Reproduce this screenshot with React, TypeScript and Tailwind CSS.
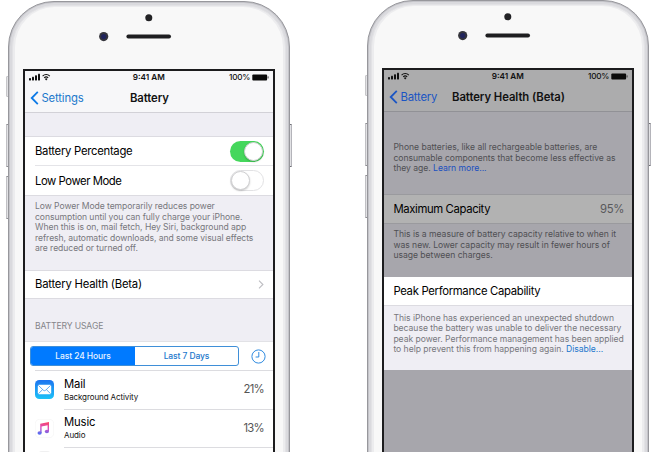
import type { ReactNode } from "react";

const label = "block whitespace-nowrap text-[11.3px] leading-[14px] text-black";
const foot = "block whitespace-nowrap text-[8.6px] leading-[10.6px]";

function Signal() {
  return (
    <svg width="22" height="8" viewBox="0 0 22 8" className="block text-[#111]">
      <rect x="0" y="5" width="2" height="2.5" rx="0.4" fill="currentColor" />
      <rect x="3" y="3.8" width="2" height="3.7" rx="0.4" fill="currentColor" />
      <rect x="6" y="2.3" width="2" height="5.2" rx="0.4" fill="currentColor" />
      <rect x="9" y="0.8" width="2" height="6.7" rx="0.4" fill="currentColor" />
      <g fill="none" stroke="currentColor" strokeWidth="1.1">
        <path d="M13.6 3.1a5 5 0 0 1 7.2 0" />
        <path d="M15.2 4.8a2.9 2.9 0 0 1 4 0" />
      </g>
      <path d="M17.2 7.5l-1.3-1.6a1.9 1.9 0 0 1 2.6 0z" fill="currentColor" />
    </svg>
  );
}

function BatteryIcon() {
  return (
    <svg width="17" height="7" viewBox="0 0 17 7" className="block">
      <rect x="0.3" y="0.4" width="14.8" height="6" rx="1" fill="#0a0a0a" />
      <rect x="15.6" y="2.2" width="0.9" height="2.4" rx="0.4" fill="#333" />
    </svg>
  );
}

function Header({ back, title, dim }: { back: string; title: ReactNode; dim?: boolean }) {
  return (
    <div
      className={
        dim
          ? "h-[42px] border-b border-[#919196] bg-[#acacad]"
          : "h-[42px] border-b border-[#d2d1d7] bg-[#f7f7f9]"
      }
    >
      <div className="grid h-[12px] grid-cols-3 items-center pr-[4px] pl-[3.5px] text-[8.2px] leading-[10px] font-semibold text-[#111]">
        <Signal />
        <span className="text-center whitespace-nowrap">9:41 AM</span>
        <span className="flex items-center justify-end gap-[2px] font-medium">
          <span className="tracking-[-0.3px]">100%</span>
          <BatteryIcon />
        </span>
      </div>
      <div className="flex h-[28px] items-center pt-[2px] pl-[5px]">
        <svg width="9" height="14" viewBox="0 0 9 14" className="block">
          <path d="M7.8 0.9L1.7 7l6.1 6.1" fill="none" stroke={dim ? "#1a55c4" : "#0b79e6"} strokeWidth="1.8" />
        </svg>
        <span
          className={
            dim
              ? "ml-[2.5px] w-[51.5px] text-[11.3px] leading-[14px] tracking-[-0.2px] text-[#1a55c4]"
              : "ml-[2.5px] w-[88.5px] text-[11.3px] leading-[14px] tracking-[-0.15px] text-[#1b77cc]"
          }
        >
          {back}
        </span>
        {title}
      </div>
    </div>
  );
}

function Phone({ children }: { children: ReactNode }) {
  return (
    <div className="relative w-[284px] shrink-0 px-[1px]">
      <div className="absolute top-[75px] left-[-1px] h-[21px] w-[3px] rounded-[1px] border border-[#c6c6c9] bg-[#e2e2e5]" />
      <div className="absolute top-[123px] left-[-1px] h-[43px] w-[3px] rounded-[1px] border border-y-[#8f8f94] border-l-[#c0c0c4] bg-[#e2e2e5]" />
      <div className="absolute top-[175px] left-[-1px] h-[43px] w-[3px] rounded-[1px] border border-y-[#8f8f94] border-l-[#c0c0c4] bg-[#e2e2e5]" />
      <div className="absolute top-[123px] right-[-1px] h-[43px] w-[3px] rounded-[1px] border border-y-[#6f6f76] border-r-[#b4b4ba] bg-[#e2e2e5]" />
      <div className="relative h-[520px] rounded-t-[46px] border border-[#97979c] bg-[#c4c4c9] p-[1px]">
        <div className="h-full rounded-t-[44px] bg-[#dadade] px-[2px] pt-[2px]">
          <div className="h-full rounded-t-[42px] border border-[#e2e2e5] bg-[#ececee] px-[2px] pt-[1px]">
            <div className="h-full rounded-t-[40px] bg-[#f8f8f8] pr-[6px] pl-[8px]">
              <svg width="252" height="62" viewBox="0 0 252 62" className="block">
                <circle cx="125.8" cy="10.8" r="3.5" fill="#222225" />
                <circle cx="80.7" cy="29.6" r="4.6" fill="#35353c" />
                <circle cx="80.7" cy="29.6" r="2.6" fill="#20245c" />
                <rect x="103.4" y="27.6" width="44.6" height="4" rx="2" fill="#1e1e20" />
              </svg>
              <div className="h-[440px] w-[252px] border-2 border-[#1c1c1e]">{children}</div>
            </div>
          </div>
        </div>
      </div>
    </div>
  );
}

function Toggle({ on }: { on?: boolean }) {
  return (
    <div
      className={
        on
          ? "flex h-[21px] w-[34px] items-center justify-end rounded-full bg-[#45d75c] p-[1px]"
          : "flex h-[21px] w-[34px] items-center rounded-full border border-[#e2e2e4] bg-white"
      }
    >
      <div className="size-[19px] rounded-full border-[0.5px] border-[#d0d0d2] bg-white shadow-[0_1px_2px_rgba(0,0,0,0.2)]" />
    </div>
  );
}

function Usage({ icon, name, detail, value }: { icon: ReactNode; name: string; detail: string; value: string }) {
  return (
    <div className="flex h-[38.5px] pl-[10px]">
      <div className="w-[29px] pt-[9px]">{icon}</div>
      <div className="flex flex-1 items-center justify-between border-b border-[#dcdce0] pr-[9px]">
        <div>
          <div className="text-[11.3px] leading-[14px] tracking-[-0.15px] text-black">{name}</div>
          <div className="text-[8px] leading-[12px] tracking-[-0.1px] text-[#111]">{detail}</div>
        </div>
        <div className="text-[11.3px] tracking-[-0.7px] text-[#555]">{value}</div>
      </div>
    </div>
  );
}

function MailIcon() {
  return (
    <svg width="19" height="19" viewBox="0 0 19 19" className="block">
      <defs>
        <linearGradient id="mail" x1="0" y1="0" x2="0" y2="1">
          <stop offset="0" stopColor="#1d74f0" />
          <stop offset="1" stopColor="#1cc3f8" />
        </linearGradient>
      </defs>
      <rect width="19" height="19" rx="4.3" fill="url(#mail)" />
      <rect x="2.8" y="4.8" width="13.4" height="9.4" rx="1.2" fill="#fff" />
      <path d="M3.3 5.3l5 4.9q1.2 1 2.4 0l5-4.9M3.3 13.8l4.3-4.2M15.7 13.8l-4.3-4.2" fill="none" stroke="#3a97ee" strokeWidth="0.8" />
    </svg>
  );
}

function MusicIcon() {
  return (
    <svg width="19" height="19" viewBox="0 0 19 19" className="block">
      <defs>
        <linearGradient id="note" gradientUnits="userSpaceOnUse" x1="10" y1="3" x2="8" y2="15">
          <stop offset="0" stopColor="#fb4468" />
          <stop offset="0.5" stopColor="#d84fc0" />
          <stop offset="1" stopColor="#5a6cf0" />
        </linearGradient>
      </defs>
      <rect x="0.3" y="0.3" width="18.4" height="18.4" rx="4.3" fill="#fff" stroke="#f3f3f4" strokeWidth="0.6" />
      <g fill="url(#note)">
        <path d="M5.2 4.8l8.8-1.7v9.2h-1.4V6.3L6.6 7.5V14H5.2z" />
        <ellipse cx="4.6" cy="14" rx="2.1" ry="1.7" />
        <ellipse cx="11.9" cy="12.5" rx="2.1" ry="1.7" />
      </g>
    </svg>
  );
}

export default function App() {
  return (
    <div className="h-[452px] w-[660px] overflow-hidden bg-white font-['Inter','Liberation_Sans',sans-serif]">
      <div className="flex gap-[75px] pl-[7px]">
        <div className="pt-[1px]">
          <Phone>
            <div className="h-full bg-[#efeef4]">
              <Header
                back="Settings"
                title={<span className="text-[11.3px] leading-[14px] font-semibold tracking-[-0.1px] text-[#111]">Battery</span>}
              />
              <div className="mt-[23px] border-y border-[#dcdbe1] bg-white pl-[10px]">
                <div className="flex h-[29px] items-center justify-between border-b border-[#e4e4e8] pr-[9.5px]">
                  <span className={`${label} tracking-[-0.28px]`}>Battery Percentage</span>
                  <Toggle on />
                </div>
                <div className="flex h-[29px] items-center justify-between pr-[9.5px]">
                  <span className={`${label} tracking-[-0.45px]`}>Low Power Mode</span>
                  <Toggle />
                </div>
              </div>
              <div className="h-[73.5px] pt-[5px] pl-[10px] tracking-[-0.06px] text-[#77777c]">
                <span className={foot}>Low Power Mode temporarily reduces power</span>
                <span className={foot}>consumption until you can fully charge your iPhone.</span>
                <span className={foot}>When this is on, mail fetch, Hey Siri, background app</span>
                <span className={foot}>refresh, automatic downloads, and some visual effects</span>
                <span className={foot}>are reduced or turned off.</span>
              </div>
              <div className="flex h-[29px] items-center justify-between border-y border-[#dcdbe1] bg-white pr-[9px] pl-[10px]">
                <span className={`${label} tracking-[-0.22px]`}>Battery Health (Beta)</span>
                <svg width="6" height="9" viewBox="0 0 6 9" className="block">
                  <path d="M1 0.7l3.9 3.8L1 8.3" fill="none" stroke="#bdbdc2" strokeWidth="1.1" />
                </svg>
              </div>
              <div className="h-[42.5px] pt-[22.5px] pl-[10px] text-[8.6px] leading-[11px] tracking-[-0.12px] text-[#85858a]">BATTERY USAGE</div>
              <div className="h-[140px] border-t border-[#e2e2e6] bg-white">
                <div className="flex h-[28px] items-center pl-[5px]">
                  <div className="flex h-[20px] w-[209px] overflow-hidden rounded-[3px] border border-[#3f8fd8] text-[8.5px] leading-[18px] font-medium tracking-[-0.1px]">
                    <div className="w-[104px] bg-[#007aff] text-center text-[#e8f3ff]">Last 24 Hours</div>
                    <div className="flex-1 text-center text-[#1b77cc]">Last 7 Days</div>
                  </div>
                  <svg width="15" height="15" viewBox="0 0 15 15" className="ml-[12px] block">
                    <circle cx="7.5" cy="7.5" r="6.6" fill="none" stroke="#2f8be0" strokeWidth="1" />
                    <path d="M7.8 3v5H4.6" fill="none" stroke="#2f8be0" strokeWidth="1" />
                  </svg>
                </div>
                <div className="ml-[10px] h-px bg-[#dcdce0]" />
                <Usage icon={<MailIcon />} name="Mail" detail="Background Activity" value="21%" />
                <Usage icon={<MusicIcon />} name="Music" detail="Audio" value="13%" />
                <div className="mt-[3px] ml-[13px] h-[16px] w-[13px] rounded-[4px] bg-[#f0f0f1]" />
              </div>
            </div>
          </Phone>
        </div>
        <div>
          <Phone>
            <div className="h-full bg-[#a7a6ac]">
              <Header
                dim
                back="Battery"
                title={<span className="text-[11.3px] leading-[14px] font-semibold tracking-[-0.06px] whitespace-nowrap text-[#111]">Battery Health (Beta)</span>}
              />
              <div className="h-[82px] pt-[30px] pl-[9.4px] tracking-[-0.03px] text-[#4f4f53]">
                <span className={foot}>Phone batteries, like all rechargeable batteries, are</span>
                <span className={foot}>consumable components that become less effective as</span>
                <span className={foot}>
                  they age. <span className="text-[#1a4fc0]">Learn more...</span>
                </span>
              </div>
              <div className="flex h-[30px] items-center justify-between border-y border-[#9a9a9e] bg-[#b2b2b2] pr-[8px] pl-[9.4px]">
                <span className={`${label} tracking-[-0.36px]`}>Maximum Capacity</span>
                <span className="text-[11.3px] tracking-[-0.3px] text-[#58585b]">95%</span>
              </div>
              <div className="h-[52.5px] pt-[5px] pl-[9.4px] tracking-[-0.03px] text-[#4f4f53]">
                <span className={foot}>This is a measure of battery capacity relative to when it</span>
                <span className={foot}>was new. Lower capacity may result in fewer hours of</span>
                <span className={foot}>usage between charges.</span>
              </div>
              <div className="flex h-[29px] items-center border-b border-[#dcdbe1] bg-white pl-[9.4px]">
                <span className={`${label} tracking-[-0.31px]`}>Peak Performance Capability</span>
              </div>
              <div className="h-[64.5px] bg-[#efeef4] pt-[7px] pl-[9.4px] tracking-[-0.03px] text-[#77777c]">
                <span className={foot}>This iPhone has experienced an unexpected shutdown</span>
                <span className={foot}>because the battery was unable to deliver the necessary</span>
                <span className={foot}>peak power. Performance management has been applied</span>
                <span className={foot}>
                  to help prevent this from happening again. <span className="text-[#1b77cc]">Disable...</span>
                </span>
              </div>
            </div>
          </Phone>
        </div>
      </div>
    </div>
  );
}
